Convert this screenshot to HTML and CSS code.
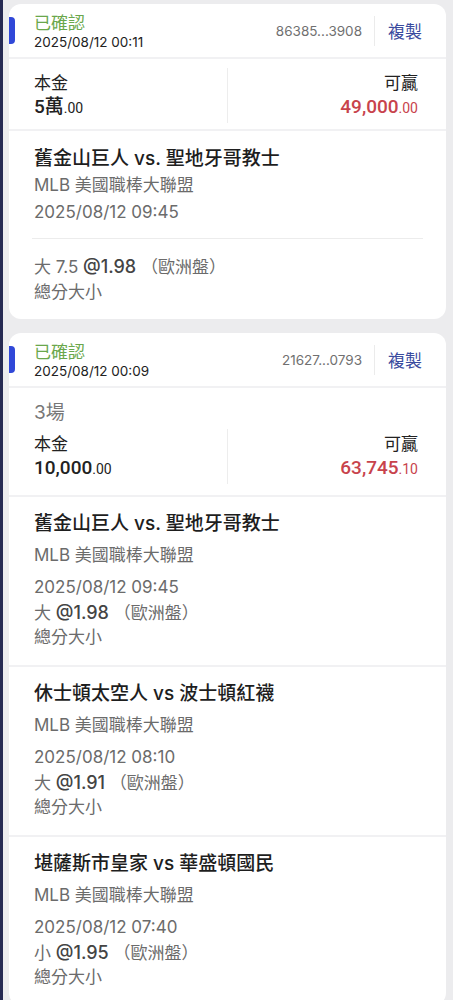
FILE: index.html
```html
<!DOCTYPE html>
<html lang="zh-Hant">
<head>
    <meta charset="UTF-8">
    <meta name="viewport" content="width=device-width, initial-scale=1.0">
    <title>注單記錄</title>
    <link rel="stylesheet" href="styles.css">
</head>
<body>
    <div class="list">

        <div class="card">
            <div class="card-head">
                <span class="tab"></span>
                <div class="status">
                    <div class="status-text">已確認</div>
                    <div class="status-time">2025/08/12 00:11</div>
                </div>
                <span class="order-id">86385...3908</span>
                <span class="head-sep"></span>
                <span class="copy">複製</span>
            </div>

            <div class="summary">
                <div class="amounts">
                    <div class="amount-col">
                        <div class="amount-label">本金</div>
                        <div class="amount-value">5萬<small>.00</small></div>
                    </div>
                    <div class="amount-col right">
                        <div class="amount-label">可贏</div>
                        <div class="amount-value win">49,000<small>.00</small></div>
                    </div>
                </div>
            </div>

            <div class="match single">
                <div class="match-title">舊金山巨人 vs. 聖地牙哥教士</div>
                <div class="match-league">MLB 美國職棒大聯盟</div>
                <div class="match-time">2025/08/12 09:45</div>
                <div class="match-line"></div>
                <div class="match-bet">大 7.5 <b>@1.98</b> （歐洲盤）</div>
                <div class="match-type">總分大小</div>
            </div>
        </div>

        <div class="card">
            <div class="card-head">
                <span class="tab"></span>
                <div class="status">
                    <div class="status-text">已確認</div>
                    <div class="status-time">2025/08/12 00:09</div>
                </div>
                <span class="order-id">21627...0793</span>
                <span class="head-sep"></span>
                <span class="copy">複製</span>
            </div>

            <div class="summary parlay">
                <div class="count">3場</div>
                <div class="amounts">
                    <div class="amount-col">
                        <div class="amount-label">本金</div>
                        <div class="amount-value">10,000<small>.00</small></div>
                    </div>
                    <div class="amount-col right">
                        <div class="amount-label">可贏</div>
                        <div class="amount-value win">63,745<small>.10</small></div>
                    </div>
                </div>
            </div>

            <div class="match">
                <div class="match-title">舊金山巨人 vs. 聖地牙哥教士</div>
                <div class="match-league">MLB 美國職棒大聯盟</div>
                <div class="match-time">2025/08/12 09:45</div>
                <div class="match-bet">大 <b>@1.98</b> （歐洲盤）</div>
                <div class="match-type">總分大小</div>
            </div>

            <div class="match">
                <div class="match-title">休士頓太空人 vs 波士頓紅襪</div>
                <div class="match-league">MLB 美國職棒大聯盟</div>
                <div class="match-time">2025/08/12 08:10</div>
                <div class="match-bet">大 <b>@1.91</b> （歐洲盤）</div>
                <div class="match-type">總分大小</div>
            </div>

            <div class="match">
                <div class="match-title">堪薩斯市皇家 vs 華盛頓國民</div>
                <div class="match-league">MLB 美國職棒大聯盟</div>
                <div class="match-time">2025/08/12 07:40</div>
                <div class="match-bet">小 <b>@1.95</b> （歐洲盤）</div>
                <div class="match-type">總分大小</div>
            </div>
        </div>

    </div>
</body>
</html>
```

FILE: styles.css
```css
body {
    margin: 0;
    background-color: #ececee;
    border-left: 3px solid #262a52;
    font-family: Inter, "Noto Sans CJK TC", "Noto Sans", sans-serif;
    color: #222;
}

.list {
    display: flex;
    flex-direction: column;
    gap: 14px;
    padding: 4px 7px 20px 6px;
}

.card {
    background-color: #fff;
    border-radius: 12px;
    overflow: hidden;
}

/* header */

.card-head {
    display: flex;
    align-items: center;
    height: 53px;
    padding-right: 24px;
    border-bottom: 2px solid #f1f1f3;
}

.tab {
    width: 6px;
    height: 27px;
    background-color: #3048d8;
    border-radius: 0 4px 4px 0;
    margin-right: 19px;
}

.status {
    flex: 1;
}

.status-text {
    color: #6aa74c;
    font-size: 17px;
    line-height: 22px;
}

.status-time {
    font-size: 13.5px;
    line-height: 16px;
    color: #222;
}

.order-id {
    font-size: 13.5px;
    color: #707070;
}

.head-sep {
    width: 1px;
    height: 30px;
    background-color: #ebebeb;
    margin: 0 13px 0 12px;
}

.copy {
    color: #3a4b9e;
    font-size: 17px;
}

/* amounts */

.summary {
    padding: 9px 0 6px;
    border-bottom: 2px solid #f1f1f3;
}

.summary.parlay {
    padding: 12px 0 11px;
}

.count {
    padding-left: 25px;
    font-size: 19px;
    line-height: 26px;
    color: #777;
    margin-bottom: 3px;
}

.amounts {
    display: flex;
}

.amount-col {
    flex: 1;
    padding: 3px 28px 3px 25px;
}

.amount-col.right {
    text-align: right;
    border-left: 1px solid #ededed;
}

.amount-label {
    font-size: 17px;
    line-height: 24px;
}

.amount-value {
    font-family: Roboto, "Noto Sans CJK TC", sans-serif;
    font-size: 19px;
    font-weight: 500;
    line-height: 24px;
    color: #222;
}

.amount-value small {
    font-size: 14px;
    font-weight: 400;
}

.amount-value.win {
    color: #c8434c;
}

/* matches */

.match {
    padding: 13px 25px 16px;
    border-bottom: 2px solid #f1f1f3;
}

.match:last-child {
    border-bottom: none;
}

.match-title {
    font-family: Inter, "Noto Sans CJK TC Medium", "Noto Sans CJK TC", sans-serif;
    font-size: 19px;
    font-weight: 500;
    line-height: 27px;
    color: #1e1e1e;
}

.match-league,
.match-time {
    font-size: 17px;
    line-height: 27px;
    color: #6b6b6b;
    margin-top: 5px;
}

.match-bet,
.match-type {
    font-size: 17px;
    line-height: 24px;
    color: #6b6b6b;
}

.match-bet b {
    color: #444;
    font-weight: 500;
    font-size: 18px;
}

.match.single {
    padding: 14px 25px 14px;
}

.match.single .match-league,
.match.single .match-time {
    margin-top: 0;
}

.match-line {
    height: 1px;
    background-color: #ececec;
    margin: 12px -2px 15px -2px;
}

.match.single .match-bet,
.match.single .match-type {
    line-height: 25px;
}
```
